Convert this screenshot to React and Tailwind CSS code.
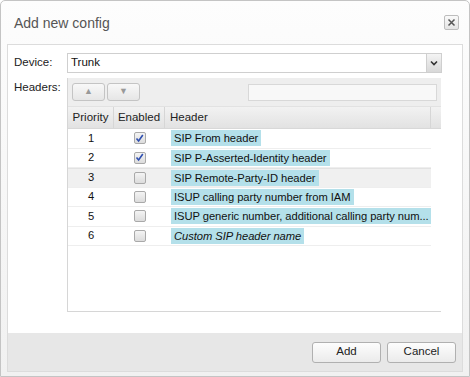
import React from 'react';

const rows = [
  { priority: 1, enabled: true, header: 'SIP From header' },
  { priority: 2, enabled: true, header: 'SIP P-Asserted-Identity header' },
  { priority: 3, enabled: false, header: 'SIP Remote-Party-ID header', hover: true },
  { priority: 4, enabled: false, header: 'ISUP calling party number from IAM' },
  { priority: 5, enabled: false, header: 'ISUP generic number, additional calling party num...' },
  { priority: 6, enabled: false, header: 'Custom SIP header name', italic: true }
];

const Checkbox = ({ checked }) => (
  <div className="w-[12px] h-[12px] border border-[#a9a9a9] rounded-[2px] bg-gradient-to-b from-[#f4f4f4] to-[#dcdcdc] flex items-center justify-center">
    {checked && (
      <svg width="9" height="9" viewBox="0 0 9 9">
        <path d="M1.5 4.5 L3.6 7 L7.8 1" fill="none" stroke="#2f4fb0" strokeWidth="1.6" />
      </svg>
    )}
  </div>
);

const App = () => {
  return (
    <div className="w-[470px] h-[377px] bg-white" style={{ fontFamily: '"Liberation Sans", Arial, sans-serif' }}>
      <div className="w-full h-full border border-[#c4c4c4] rounded-t-[5px] bg-gradient-to-b from-[#fdfdfd] to-[#f1f1f1] flex flex-col px-[6px] pb-[4px]">
        {/* title bar */}
        <div className="h-[43px] flex items-center justify-between pl-[7px] pr-[4px] shrink-0">
          <span className="text-[14px] text-[#555] leading-none mt-[1px]">Add new config</span>
          <div className="w-[15px] h-[15px] border border-[#bdbdbd] rounded-[2px] bg-gradient-to-b from-[#fafafa] to-[#e4e4e4] flex items-center justify-center">
            <svg width="9" height="9" viewBox="0 0 9 9">
              <path d="M1.5 1.5 L7.5 7.5 M7.5 1.5 L1.5 7.5" stroke="#555" strokeWidth="1.5" />
            </svg>
          </div>
        </div>

        {/* body */}
        <div className="flex-1 flex flex-col border border-[#dcdcdc] bg-white">
          <div className="flex-1 pl-[6px] pr-[20px] pt-[8px]">
            {/* device */}
            <div className="flex items-center h-[20px]">
              <span className="w-[53px] shrink-0 text-[11.5px] text-[#222]">Device:</span>
              <div className="flex-1 min-w-0 h-[20px] border border-[#cfcfcf] flex items-center">
                <span className="flex-1 pl-[3px] text-[11.5px] text-[#111]">Trunk</span>
                <div className="w-[15px] h-[18px] border-l border-[#cfcfcf] bg-gradient-to-b from-[#f4f4f4] to-[#d8d8d8] flex items-center justify-center">
                  <svg width="8" height="6" viewBox="0 0 8 6">
                    <path d="M1 1.5 L4 4.5 L7 1.5" fill="none" stroke="#333" strokeWidth="1.6" />
                  </svg>
                </div>
              </div>
            </div>

            {/* headers */}
            <div className="flex mt-[5px]">
              <span className="w-[53px] shrink-0 text-[11.5px] text-[#222] pt-[1px]">Headers:</span>
              <div className="flex-1 min-w-0 h-[234px] border-l border-b border-[#d6d6d6] flex flex-col mr-[1px]">
                {/* toolbar */}
                <div className="h-[29px] bg-[#eeeeee] flex items-center pl-[4px] pr-[4px] border-b border-[#e2e2e2]">
                  <div className="w-[33px] h-[18px] border border-[#c4c4c4] rounded-[3px] bg-gradient-to-b from-[#f8f8f8] to-[#e6e6e6] flex items-center justify-center text-[9px] text-[#999]">▲</div>
                  <div className="w-[33px] h-[18px] ml-[2px] border border-[#c4c4c4] rounded-[3px] bg-gradient-to-b from-[#f8f8f8] to-[#e6e6e6] flex items-center justify-center text-[9px] text-[#999]">▼</div>
                  <div className="flex-1" />
                  <div className="w-[189px] h-[17px] border border-[#d8d8d8] bg-[#f8f8f8]" />
                </div>

                {/* column header */}
                <div className="h-[22px] flex bg-gradient-to-b from-[#f2f2f2] to-[#e2e2e2] border-b border-[#d8d8d8] text-[11.5px] text-[#222]">
                  <div className="w-[46px] flex items-center justify-center border-r border-[#d6d6d6]">Priority</div>
                  <div className="w-[51px] flex items-center justify-center border-r border-[#d6d6d6]">Enabled</div>
                  <div className="flex-1 flex items-center pl-[5px] border-r border-[#d6d6d6]">Header</div>
                  <div className="w-[10px]" />
                </div>

                {/* rows */}
                <div className="flex-1 bg-white">
                  {rows.map((r) => (
                    <div
                      key={r.priority}
                      className={`h-[19.5px] flex border-b border-[#eeeeee] text-[11.2px] text-[#111] mr-[10px] ${r.hover ? 'bg-[#f0f0f0] border-t border-t-[#e2e2e2]' : ''}`}
                    >
                      <div className="w-[46px] flex items-center justify-center">{r.priority}</div>
                      <div className="w-[51px] flex items-center justify-center">
                        <Checkbox checked={r.enabled} />
                      </div>
                      <div className="flex-1 min-w-0 flex items-center pl-[6px] overflow-hidden">
                        <span className={`bg-[#b4e0ea] px-[3px] h-[16px] leading-[16px] whitespace-nowrap tracking-[-0.05px] ${r.italic ? 'italic' : ''}`}>
                          {r.header}
                        </span>
                      </div>
                    </div>
                  ))}
                </div>
              </div>
            </div>
          </div>

          {/* footer */}
          <div className="h-[38px] bg-[#e7e7e7] flex items-center justify-end gap-[6px] pr-[6px]">
            <button className="w-[69px] h-[21px] border border-[#b0b0b0] rounded-[3px] bg-gradient-to-b from-[#fdfdfd] to-[#ebebeb] text-[11.5px] text-[#222]">Add</button>
            <button className="w-[69px] h-[21px] border border-[#b0b0b0] rounded-[3px] bg-gradient-to-b from-[#fdfdfd] to-[#ebebeb] text-[11.5px] text-[#222]">Cancel</button>
          </div>
        </div>
      </div>
    </div>
  );
};

export default App;
